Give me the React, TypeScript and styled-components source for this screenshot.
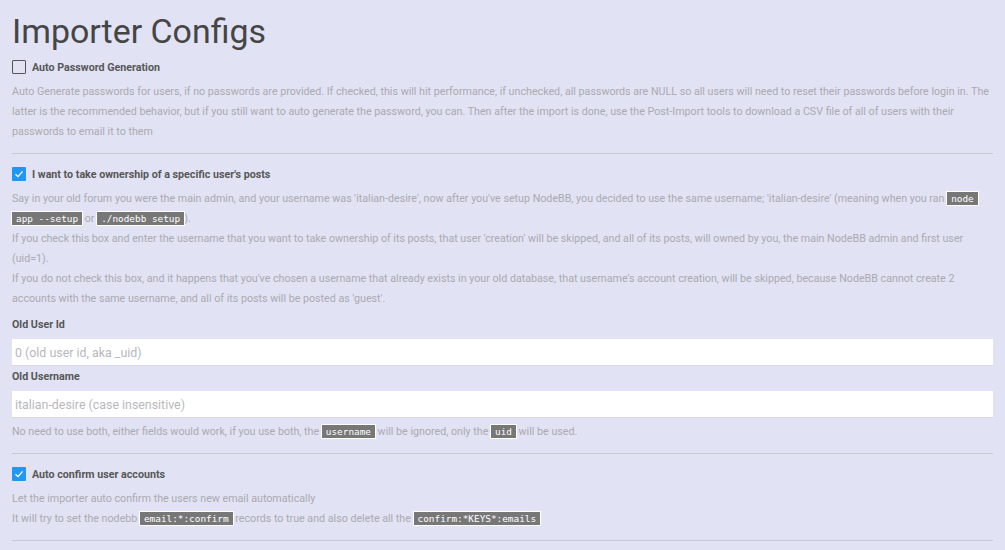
import styled, { createGlobalStyle } from "styled-components";

const GlobalStyle = createGlobalStyle`
  html, body {
    margin: 0;
    padding: 0;
    background: #e1e2f4;
  }
  body {
    font-family: Roboto, "Liberation Sans", sans-serif;
  }
`;

const Page = styled.div`
  padding: 12px 12px 0 12px;
  width: 981px;
`;

const Title = styled.h1`
  margin: 0 0 7px 0;
  font-size: 33.9px;
  font-weight: 400;
  color: #454545;
  line-height: 40px;
`;

const Section = styled.div`
  padding-bottom: 11px;
  border-bottom: 1px solid #c9c9d2;
  margin-bottom: 12px;
`;

const CheckRow = styled.label`
  display: flex;
  align-items: center;
  gap: 6px;
  height: 16px;
  margin-bottom: 7px;
`;

const Box = styled.span<{ $checked?: boolean }>`
  width: 14px;
  height: 14px;
  box-sizing: border-box;
  border-radius: 1px;
  display: inline-flex;
  align-items: center;
  justify-content: center;
  background: ${(p) => (p.$checked ? "#2196f3" : "transparent")};
  border: ${(p) => (p.$checked ? "none" : "1.5px solid #555")};
`;

const LabelText = styled.span`
  font-size: 10.7px;
  font-weight: 700;
  color: #575757;
`;

const Text = styled.p`
  margin: 0;
  font-size: 10.7px;
  line-height: 20px;
  color: #aaaab0;
`;

const Code = styled.code`
  font-family: "DejaVu Sans Mono", "Liberation Mono", monospace;
  font-size: 9.4px;
  line-height: 12px;
  background: #777;
  color: #fff;
  padding: 1px 4px;
  outline: 1px solid #fff;
  -webkit-box-decoration-break: clone;
  box-decoration-break: clone;
`;

const FieldLabel = styled.div`
  font-size: 10.7px;
  font-weight: 700;
  color: #575757;
  line-height: 14px;
  margin: 0 0 7px 0;
`;

const Input = styled.input`
  display: block;
  width: 100%;
  box-sizing: border-box;
  height: 27px;
  border: none;
  border-bottom: 1px solid #d8d8de;
  background: #fff;
  padding: 0 3px;
  font-family: Roboto, "Liberation Sans", sans-serif;
  font-size: 12.4px;
  margin-bottom: 4px;
  outline: none;
  &::placeholder {
    color: #b8b8bd;
  }
`;

const Fields = styled.div`
  margin-top: 9px;
  margin-bottom: 3px;
`;

function Check({ checked, label }: { checked?: boolean; label: string }) {
  return (
    <CheckRow>
      <Box $checked={checked}>
        {checked ? (
          <svg width="10" height="10" viewBox="0 0 10 10">
            <path d="M1.5 5.2 L4 7.6 L8.6 2.4" fill="none" stroke="#fff" strokeWidth="1.3" />
          </svg>
        ) : null}
      </Box>
      <LabelText>{label}</LabelText>
    </CheckRow>
  );
}

export default function App() {
  return (
    <Page>
      <GlobalStyle />
      <Title>Importer Configs</Title>

      <Section>
        <Check label="Auto Password Generation" />
        <Text>
          Auto Generate passwords for users, if no passwords are provided. If checked, this will hit performance, if unchecked, all passwords are NULL so all users will need to reset their passwords before login in. The latter is the recommended behavior, but if you still want to auto generate the password, you can. Then after the import is done, use the Post-Import tools to download a CSV file of all of users with their passwords to email it to them
        </Text>
      </Section>

      <Section>
        <Check checked label="I want to take ownership of a specific user's posts" />
        <Text>
          Say in your old forum you were the main admin, and your username was 'italian-desire', now after you've setup NodeBB, you decided to use the same username; 'italian-desire' (meaning when you ran <Code>node app --setup</Code> or <Code>./nodebb setup</Code>).
        </Text>
        <Text>
          If you check this box and enter the username that you want to take ownership of its posts, that user 'creation' will be skipped, and all of its posts, will owned by you, the main NodeBB admin and first user (uid=1).
        </Text>
        <Text>
          If you do not check this box, and it happens that you've chosen a username that already exists in your old database, that username's account creation, will be skipped, because NodeBB cannot create 2 accounts with the same username, and all of its posts will be posted as 'guest'.
        </Text>
        <Fields>
          <FieldLabel>Old User Id</FieldLabel>
          <Input placeholder="0 (old user id, aka _uid)" />
          <FieldLabel>Old Username</FieldLabel>
          <Input placeholder="italian-desire (case insensitive)" />
        </Fields>
        <Text>
          No need to use both, either fields would work, if you use both, the <Code>username</Code> will be ignored, only the <Code>uid</Code> will be used.
        </Text>
      </Section>

      <Section>
        <Check checked label="Auto confirm user accounts" />
        <Text>Let the importer auto confirm the users new email automatically</Text>
        <Text>
          It will try to set the nodebb <Code>email:*:confirm</Code> records to true and also delete all the <Code>confirm:*KEYS*:emails</Code>
        </Text>
      </Section>
    </Page>
  );
}
